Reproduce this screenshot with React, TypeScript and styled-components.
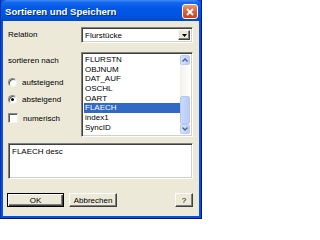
import React from 'react';
import styled, { createGlobalStyle } from 'styled-components';

const GlobalStyle = createGlobalStyle`
  html, body {
    margin: 0;
    padding: 0;
    background: #ffffff;
  }
  * {
    box-sizing: border-box;
  }
`;

const Window = styled.div`
  width: 202px;
  height: 219px;
  display: flex;
  flex-direction: column;
  background: #0a50dc;
  border-left: 1px solid #0831a8;
  border-right: 1px solid #00138c;
  border-bottom: 1px solid #00138c;
  font-family: 'Liberation Sans', Arial, sans-serif;
  font-size: 8px;
  color: #000;
`;

const TitleBar = styled.div`
  height: 21px;
  flex: none;
  display: flex;
  align-items: center;
  justify-content: space-between;
  padding: 1px 3px 0 4px;
  background: linear-gradient(
    to bottom,
    #3f8cf3 0%,
    #1667ef 12%,
    #0058e6 40%,
    #0054e0 75%,
    #0049c8 100%
  );
  border-radius: 6px 6px 0 0;
`;

const TitleText = styled.span`
  font-family: 'Liberation Sans', Arial, sans-serif;
  font-weight: bold;
  font-size: 9.6px;
  color: #ffffff;
  text-shadow: 1px 1px 0 #0a2a8a;
  letter-spacing: 0;
`;

const CloseButton = styled.div`
  width: 16px;
  height: 15px;
  margin-top: 1px;
  border: 1px solid #ffffff;
  border-radius: 3px;
  background: linear-gradient(to bottom, #e89a7c 0%, #dd6a45 40%, #c9421c 100%);
  display: flex;
  align-items: center;
  justify-content: center;
`;

const Body = styled.div`
  flex: 1;
  margin: 0 2px 2px 2px;
  background: #ece9d8;
  padding: 6px 6px 0 5px;
  display: flex;
  flex-direction: column;
`;

const FieldGrid = styled.div`
  display: grid;
  grid-template-columns: 73px 112px;
  row-gap: 9px;
`;

const Label = styled.div`
  line-height: 16px;
`;

const Sunken = styled.div`
  border: 1px solid;
  border-color: #808080 #ffffff #ffffff #808080;
  box-shadow: inset 1px 1px 0 #404040, inset -1px -1px 0 #d4d0c8;
  background: #ffffff;
`;

const ComboBox = styled(Sunken)`
  height: 16px;
  display: flex;
  align-items: stretch;
  padding: 2px;
`;

const ComboText = styled.div`
  flex: 1;
  line-height: 12px;
  padding-left: 1px;
`;

const DropButton = styled.div`
  width: 12px;
  background: #ece9d8;
  border: 1px solid;
  border-color: #f4f3ee #404040 #404040 #f4f3ee;
  box-shadow: inset -1px -1px 0 #808080;
  display: flex;
  align-items: center;
  justify-content: center;
`;

const OptionColumn = styled.div`
  display: flex;
  flex-direction: column;
`;

const OptionRow = styled.div<{ $top: number }>`
  display: flex;
  align-items: center;
  gap: 5px;
  height: 10px;
  margin-top: ${(p) => p.$top}px;
`;

const RadioMark = styled.span<{ $checked?: boolean }>`
  width: 9px;
  height: 9px;
  border-radius: 50%;
  border: 1px solid;
  border-color: #8a8a8a #f4f3ee #f4f3ee #8a8a8a;
  box-shadow: inset 1px 1px 0 #5a5a5a;
  background: #ffffff;
  display: flex;
  align-items: center;
  justify-content: center;
  &::after {
    content: '';
    width: 3px;
    height: 3px;
    border-radius: 50%;
    background: ${(p) => (p.$checked ? '#000' : 'transparent')};
  }
`;

const CheckMark = styled.span`
  width: 10px;
  height: 10px;
  border: 1px solid;
  border-color: #8a8a8a #f4f3ee #f4f3ee #8a8a8a;
  box-shadow: inset 1px 1px 0 #5a5a5a;
  background: #ffffff;
`;

const ListBox = styled(Sunken)`
  height: 85px;
  padding: 2px;
  display: flex;
`;

const ListItems = styled.div`
  flex: 1;
  padding-top: 0;
`;

const ListItem = styled.div<{ $selected?: boolean }>`
  line-height: 9.7px;
  height: 9.7px;
  padding-left: 1px;
  background: ${(p) => (p.$selected ? '#316ac5' : 'transparent')};
  color: ${(p) => (p.$selected ? '#ffffff' : '#000000')};
`;

const ScrollBar = styled.div`
  width: 10px;
  display: flex;
  flex-direction: column;
  background: linear-gradient(to right, #f3f1ec, #fefefb);
`;

const ScrollArrow = styled.div`
  height: 10px;
  flex: none;
  border: 1px solid #b9cbf3;
  border-radius: 2px;
  background: linear-gradient(to right, #d6e2fc, #bccdf7);
  display: flex;
  align-items: center;
  justify-content: center;
`;

const ScrollTrack = styled.div`
  flex: 1;
  display: flex;
  flex-direction: column;
`;

const ScrollThumb = styled.div<{ $offset: number; $length: number }>`
  margin-top: ${(p) => p.$offset}px;
  height: ${(p) => p.$length}px;
  border: 1px solid #b4c6f3;
  border-radius: 2px;
  background: linear-gradient(to right, #cbd9fb, #b9cbf6);
`;

const DescBox = styled(Sunken)`
  margin-top: 6px;
  height: 36px;
  padding: 3px 2px 2px 3px;
  line-height: 10px;
`;

const ButtonRow = styled.div`
  margin-top: 14px;
  display: flex;
  align-items: center;
  gap: 5px;
  margin-left: -1px;
`;

const PushButton = styled.div<{ $width: number; $default?: boolean }>`
  width: ${(p) => p.$width}px;
  height: 14px;
  display: flex;
  align-items: center;
  justify-content: center;
  background: #ece9d8;
  border: 1px solid;
  border-color: ${(p) =>
    p.$default ? '#000000' : '#ffffff #404040 #404040 #ffffff'};
  box-shadow: ${(p) =>
    p.$default
      ? 'inset 1px 1px 0 #ffffff, inset -1px -1px 0 #404040, inset -2px -2px 0 #808080'
      : 'inset -1px -1px 0 #808080'};
`;

const Spacer = styled.div`
  flex: 1;
`;

const fields = ['FLURSTN', 'OBJNUM', 'DAT_AUF', 'OSCHL', 'OART', 'FLAECH', 'index1', 'SyncID'];

const Chevron = ({ up }: { up?: boolean }) => (
  <svg width="6" height="4" viewBox="0 0 6 4">
    <path
      d={up ? 'M0.5 3.5 L3 1 L5.5 3.5' : 'M0.5 0.5 L3 3 L5.5 0.5'}
      fill="none"
      stroke="#4d6185"
      strokeWidth="1.3"
    />
  </svg>
);

const App: React.FunctionComponent = () => {
  return (
    <>
      <GlobalStyle />
      <Window>
        <TitleBar>
          <TitleText>Sortieren und Speichern</TitleText>
          <CloseButton>
            <svg width="8" height="8" viewBox="0 0 8 8">
              <path d="M1 1 L7 7 M7 1 L1 7" stroke="#ffffff" strokeWidth="1.8" />
            </svg>
          </CloseButton>
        </TitleBar>
        <Body>
          <FieldGrid>
            <Label>Relation</Label>
            <ComboBox>
              <ComboText>Flurstücke</ComboText>
              <DropButton>
                <svg width="5" height="3" viewBox="0 0 5 3">
                  <path d="M0 0 H5 L2.5 3 Z" fill="#000" />
                </svg>
              </DropButton>
            </ComboBox>
            <OptionColumn>
              <OptionRow $top={3}>sortieren nach</OptionRow>
              <OptionRow $top={12}>
                <RadioMark />
                aufsteigend
              </OptionRow>
              <OptionRow $top={7}>
                <RadioMark $checked />
                absteigend
              </OptionRow>
              <OptionRow $top={9}>
                <CheckMark />
                numerisch
              </OptionRow>
            </OptionColumn>
            <ListBox>
              <ListItems>
                {fields.map((f) => (
                  <ListItem key={f} $selected={f === 'FLAECH'}>
                    {f}
                  </ListItem>
                ))}
              </ListItems>
              <ScrollBar>
                <ScrollArrow>
                  <Chevron up />
                </ScrollArrow>
                <ScrollTrack>
                  <ScrollThumb $offset={31} $length={28} />
                </ScrollTrack>
                <ScrollArrow>
                  <Chevron />
                </ScrollArrow>
              </ScrollBar>
            </ListBox>
          </FieldGrid>
          <DescBox>FLAECH desc</DescBox>
          <ButtonRow>
            <PushButton $width={57} $default>
              OK
            </PushButton>
            <PushButton $width={48}>Abbrechen</PushButton>
            <Spacer />
            <PushButton $width={18}>?</PushButton>
          </ButtonRow>
        </Body>
      </Window>
    </>
  );
};

export default App;
